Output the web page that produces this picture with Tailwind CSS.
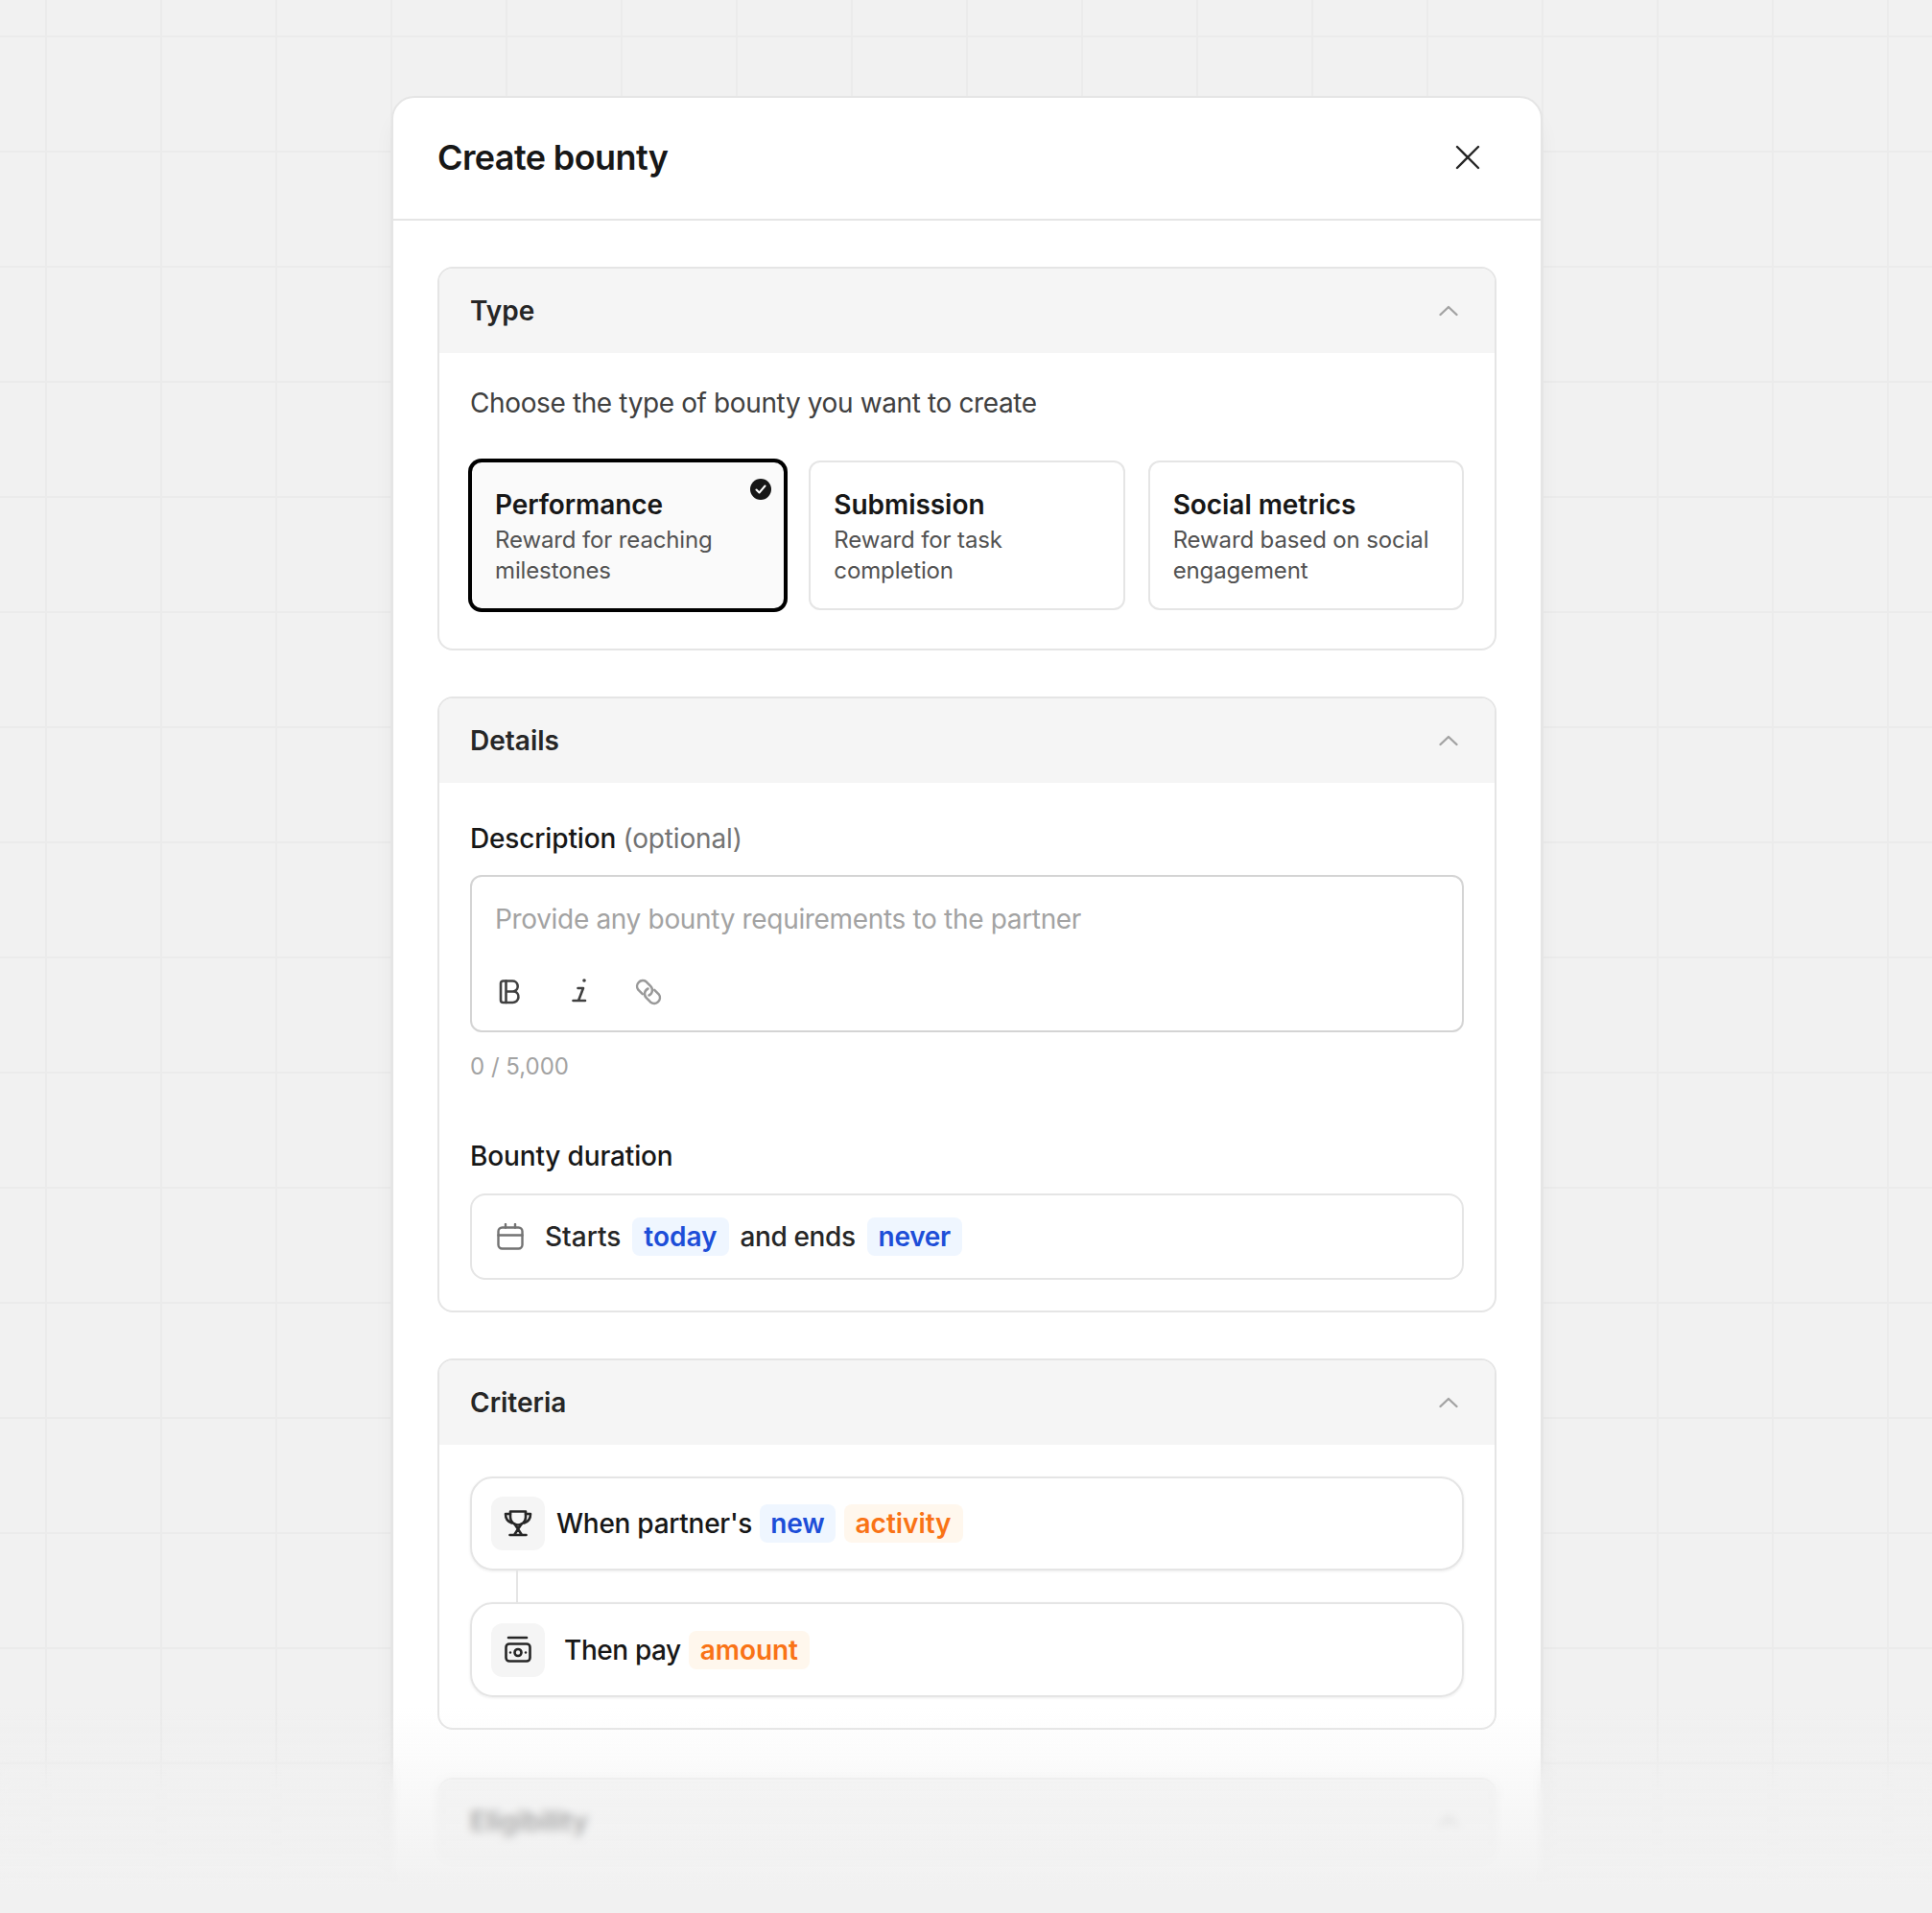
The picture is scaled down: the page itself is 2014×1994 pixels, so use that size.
<!DOCTYPE html>
<html>
  <head>
    <meta charset="utf-8" />
    <title>Create bounty</title>
    <script src="https://cdn.jsdelivr.net/npm/@tailwindcss/browser@4"></script>
  </head>
  <body class="bg-[#f1f1f1]">
    <div
      class="relative w-[2014px] h-[1994px] overflow-hidden bg-[#f1f1f1] font-['Inter',sans-serif] antialiased bg-[linear-gradient(to_right,#ebebeb_2px,transparent_2px),linear-gradient(to_bottom,#ebebeb_2px,transparent_2px)] bg-size-[120px_120px] bg-position-[47px_37px]"
    >
      <!-- modal -->
      <div class="ml-[408px] mt-[100px] w-[1200px] h-[1867px] rounded-[24px] border-2 border-[#e5e5e5] bg-white shadow-[0_20px_25px_-5px_rgba(0,0,0,0.07)] overflow-hidden">
        <div class="flex h-[128px] items-center justify-between border-b-2 border-[#e5e5e5] pb-[2px] pl-[46px] pr-[62px]">
          <h1 class="text-[36px] leading-[48px] font-semibold tracking-[-0.6px] text-[#171717]">Create bounty</h1>
          <svg class="w-[28px] h-[28px] text-[#262626]" viewBox="0 0 28 28" fill="none" stroke="currentColor" stroke-width="2.4" stroke-linecap="round">
            <path d="M3 3l22 22M25 3L3 25" />
          </svg>
        </div>

        <div class="flex flex-col px-[46px] pt-[48px]">
          <!-- Type -->
          <section class="rounded-[16px] border-2 border-[#e5e5e5] overflow-hidden">
            <div class="flex h-[88px] items-center justify-between bg-[#f5f5f5] pl-[32px] pr-[36px]">
              <h2 class="text-[28px] leading-[40px] font-semibold text-[#262626]">Type</h2>
              <svg class="w-[24px] h-[24px] text-[#a3a3a3]" viewBox="0 0 24 24" fill="none" stroke="currentColor" stroke-width="2.4" stroke-linecap="round" stroke-linejoin="round"><path d="M3.5 16l8.5-8 8.5 8" /></svg>
            </div>
            <div class="px-[32px] pt-[32px] pb-[40px]">
              <p class="text-[28px] leading-[40px] tracking-[-0.38px] text-[#404040]">Choose the type of bounty you want to create</p>
              <div class="mt-[40px] grid grid-cols-3 gap-[24px]">
                <div class="relative h-[156px] rounded-[12px] border-2 border-black bg-[#fafafa] p-[24px] ring-2 ring-black">
                  <div class="text-[28px] leading-[41px] font-semibold tracking-[-0.1px] text-[#171717]">Performance</div>
                  <div class="text-[24px] leading-[32px] tracking-[-0.13px] text-[#525252]">Reward for reaching milestones</div>
                  <svg class="absolute right-[12px] top-[16px] w-[24px] h-[24px]" viewBox="0 0 24 24">
                    <circle cx="12" cy="12" r="11" fill="#171717" />
                    <path d="M7.5 12.5l3 3 6-7" fill="none" stroke="#fff" stroke-width="2" stroke-linecap="round" stroke-linejoin="round" />
                  </svg>
                </div>
                <div class="h-[156px] rounded-[12px] border-2 border-[#e5e5e5] p-[24px]">
                  <div class="text-[28px] leading-[41px] font-semibold tracking-[-0.05px] text-[#171717]">Submission</div>
                  <div class="text-[24px] leading-[32px] tracking-[-0.13px] text-[#525252]">Reward for task completion</div>
                </div>
                <div class="h-[156px] rounded-[12px] border-2 border-[#e5e5e5] p-[24px]">
                  <div class="text-[28px] leading-[41px] font-semibold tracking-[-0.05px] text-[#171717]">Social metrics</div>
                  <div class="text-[24px] leading-[32px] tracking-[-0.13px] text-[#525252]">Reward based on social engagement</div>
                </div>
              </div>
            </div>
          </section>

          <!-- Details -->
          <section class="mt-[48px] rounded-[16px] border-2 border-[#e5e5e5] overflow-hidden">
            <div class="flex h-[88px] items-center justify-between bg-[#f5f5f5] pl-[32px] pr-[36px]">
              <h2 class="text-[28px] leading-[40px] font-semibold text-[#262626]">Details</h2>
              <svg class="w-[24px] h-[24px] text-[#a3a3a3]" viewBox="0 0 24 24" fill="none" stroke="currentColor" stroke-width="2.4" stroke-linecap="round" stroke-linejoin="round"><path d="M3.5 16l8.5-8 8.5 8" /></svg>
            </div>
            <div class="px-[32px] pt-[38px] pb-[32px]">
              <div class="text-[28px] leading-[40px] font-medium tracking-[-0.15px] text-[#171717]">Description <span class="font-normal tracking-[-0.15px] text-[#737373]">(optional)</span></div>
              <div class="mt-[18px] h-[164px] rounded-[12px] border-2 border-[#d4d4d4] px-[24px] pt-[24px]">
                <div class="text-[28px] leading-[40px] tracking-[-0.33px] text-[#a3a3a3]">Provide any bounty requirements to the partner</div>
                <div class="mt-[40px] flex gap-[40px]">
                  <svg class="w-[32px] h-[32px] text-[#404040]" viewBox="0 0 32 32" fill="none" stroke="currentColor" stroke-width="2.6" stroke-linecap="round" stroke-linejoin="round">
                    <path d="M8.5 4.5h9.5a5.5 5.5 0 0 1 2 10.7a6 6 0 0 1-1.5 11.8H8.5A2.5 2.5 0 0 1 6 24.5V7a2.5 2.5 0 0 1 2.5-2.5z" />
                    <path d="M11.5 4.5V27M11.5 15.5h8" />
                  </svg>
                  <svg class="w-[32px] h-[32px] text-[#404040]" viewBox="0 0 32 32" fill="none" stroke="currentColor" stroke-width="2.6" stroke-linecap="round" stroke-linejoin="round">
                    <path d="M14.5 12H20L15 25M9.5 25H22" />
                    <circle cx="21" cy="4" r="1.8" fill="currentColor" stroke="none" />
                  </svg>
                  <svg class="w-[32px] h-[32px] text-[#999999]" viewBox="0 0 32 32" fill="none" stroke="currentColor" stroke-width="2.5" stroke-linecap="round" stroke-linejoin="round">
                    <path d="M9.8 18.2L5.3 13.7A6 6 0 0 1 13.7 5.3L18.2 9.8A6 6 0 0 1 16.5 19.5" />
                    <path d="M22.2 13.8L26.7 18.3A6 6 0 0 1 18.3 26.7L13.8 22.2A6 6 0 0 1 15.5 12.5" />
                  </svg>
                </div>
              </div>
              <div class="mt-[20px] text-[24px] leading-[32px] text-[#a3a3a3]">0 / 5,000</div>
              <div class="mt-[57px] text-[28px] leading-[40px] font-medium tracking-[-0.15px] text-[#171717]">Bounty duration</div>
              <div class="mt-[19px] flex h-[90px] items-center gap-[12px] rounded-[16px] border-2 border-[#e5e5e5] pl-[26px] text-[28px] font-medium text-[#262626]">
                <svg class="mr-[10px] w-[28px] h-[28px] text-[#737373]" viewBox="0 0 28 28" fill="none" stroke="currentColor" stroke-width="2.4" stroke-linecap="round" stroke-linejoin="round">
                  <rect x="1.5" y="4.5" width="25" height="22" rx="4" />
                  <path d="M1.5 12.5h25M9 1v3.5M19 1v3.5" />
                </svg>
                <span>Starts</span>
                <span class="rounded-[8px] bg-[#eff6ff] px-[12px] leading-[40px] font-semibold text-[#1d4ed8]">today</span>
                <span class="tracking-[-0.4px]">and ends</span>
                <span class="rounded-[8px] bg-[#eff6ff] px-[12px] leading-[40px] font-semibold tracking-[-0.3px] text-[#1d4ed8]">never</span>
              </div>
            </div>
          </section>

          <!-- Criteria -->
          <section class="mt-[48px] rounded-[16px] border-2 border-[#e5e5e5] overflow-hidden">
            <div class="flex h-[88px] items-center justify-between bg-[#f5f5f5] pl-[32px] pr-[36px]">
              <h2 class="text-[28px] leading-[40px] font-semibold text-[#262626]">Criteria</h2>
              <svg class="w-[24px] h-[24px] text-[#a3a3a3]" viewBox="0 0 24 24" fill="none" stroke="currentColor" stroke-width="2.4" stroke-linecap="round" stroke-linejoin="round"><path d="M3.5 16l8.5-8 8.5 8" /></svg>
            </div>
            <div class="px-[32px] pt-[33px] pb-[32px]">
              <div class="flex h-[98px] items-center rounded-[24px] border-2 border-[#e5e5e5] pl-[20px] text-[28px] font-medium text-[#171717] shadow-[0_1px_3px_rgba(0,0,0,0.08)]">
                <div class="mr-[12px] flex h-[56px] w-[56px] items-center justify-center rounded-[12px] bg-[#f5f5f5]">
                  <svg class="w-[30px] h-[30px] text-[#262626]" viewBox="0 0 30 30" fill="none" stroke="currentColor" stroke-width="2.6" stroke-linecap="round" stroke-linejoin="round">
                    <path d="M7 2.5h16v6a8 8 0 0 1-16 0z" />
                    <path d="M7 5H2c0 5 2 8 6.5 9.5M23 5h5c0 5-2 8-6.5 9.5" />
                    <path d="M11.5 15.5L19 27M18.5 15.5L11 27M6.5 27h17" />
                  </svg>
                </div>
                <span class="tracking-[-0.27px]">When partner's</span>
                <span class="ml-[8px] rounded-[8px] bg-[#eff6ff] px-[11px] leading-[40px] font-semibold tracking-[-0.1px] text-[#1d4ed8]">new</span>
                <span class="ml-[9px] rounded-[8px] bg-[#fff7ed] px-[12px] leading-[40px] font-semibold tracking-[-0.05px] text-[#f97316]">activity</span>
              </div>
              <div class="ml-[48px] h-[33px] w-[2px] bg-[#e5e5e5]"></div>
              <div class="flex h-[99px] items-center rounded-[24px] border-2 border-[#e5e5e5] pl-[20px] text-[28px] font-medium text-[#171717] shadow-[0_1px_3px_rgba(0,0,0,0.08)]">
                <div class="mr-[20px] flex h-[56px] w-[56px] items-center justify-center rounded-[12px] bg-[#f5f5f5]">
                  <svg class="w-[30px] h-[30px] text-[#262626]" viewBox="0 0 30 30" fill="none" stroke="currentColor" stroke-width="2.6" stroke-linecap="round" stroke-linejoin="round">
                    <path d="M5 2h19" />
                    <rect x="2.5" y="8.5" width="25" height="18" rx="3.5" />
                    <circle cx="15" cy="17.5" r="3.5" />
                    <circle cx="7" cy="17.5" r="1.2" fill="currentColor" stroke="none" />
                    <circle cx="23" cy="17.5" r="1.2" fill="currentColor" stroke="none" />
                  </svg>
                </div>
                <span class="tracking-[-0.4px]">Then pay</span>
                <span class="ml-[8px] rounded-[8px] bg-[#fff7ed] px-[12px] leading-[40px] font-semibold tracking-[-0.1px] text-[#f97316]">amount</span>
              </div>
            </div>
          </section>

          <!-- Eligibility, collapsed under the fade -->
          <section class="mt-[50px] rounded-[16px] border-2 border-[#e5e5e5] overflow-hidden">
            <div class="flex h-[88px] items-center justify-between bg-[#f5f5f5] pl-[32px] pr-[36px]">
              <h2 class="text-[28px] leading-[40px] font-semibold text-[#262626]">Eligibility</h2>
              <svg class="w-[24px] h-[24px] text-[#a3a3a3]" viewBox="0 0 24 24" fill="none" stroke="currentColor" stroke-width="2.4" stroke-linecap="round" stroke-linejoin="round"><path d="M3.5 16l8.5-8 8.5 8" /></svg>
            </div>
          </section>
        </div>
      </div>

      <!-- bottom fade over the modal -->
      <div class="absolute inset-x-0 top-[1830px] bottom-0 backdrop-blur-[4px] [mask-image:linear-gradient(to_bottom,transparent,black_40px)]"></div>
      <div class="absolute inset-x-0 top-[1780px] h-[190px] bg-linear-to-b from-[#f1f1f1]/0 to-[#f1f1f1]"></div>
      <div class="absolute inset-x-0 top-[1970px] bottom-0 bg-[#f1f1f1]"></div>
    </div>
  </body>
</html>
